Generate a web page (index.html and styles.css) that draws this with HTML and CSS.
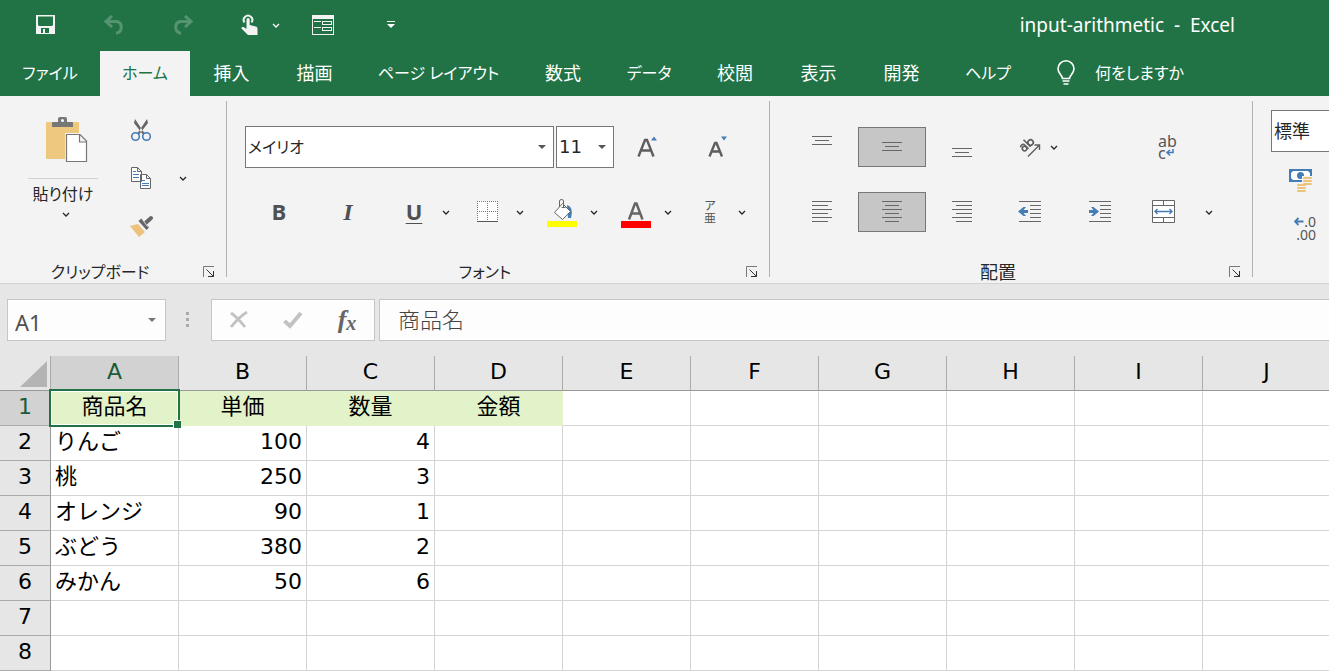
FILE: index.html
```html
<!DOCTYPE html>
<html lang="ja">
<head>
<meta charset="utf-8">
<meta name="viewport" content="width=device-width, initial-scale=1">
<title>input-arithmetic - Excel</title>
<link rel="stylesheet" href="styles.css">
</head>
<body>
<svg class="defs" aria-hidden="true">
  <symbol id="chev" viewBox="0 0 10 10"><path d="M2 4l3 3 3-3" fill="none" stroke="currentColor" stroke-width="1.300"/></symbol>
  <symbol id="tri" viewBox="0 0 8 4"><path d="M0 0h8L4 4z" fill="currentColor"/></symbol>
  <symbol id="launch" viewBox="0 0 12 12"><path d="M.5 11V.5H11" fill="none" stroke="#777"/><path d="M3.500 3.500l7 7M5 10.500h5.500V5" fill="none" stroke="#333"/></symbol>
</svg>

<header class="top">
  <div class="titlebar">
    <div class="quick">
      <button class="ic" aria-label="上書き保存"><svg width="20" height="20" viewBox="0 0 20 20"><path fill="#f3f3f3" fill-rule="evenodd" d="M1 0h19v19H1zM3 1.500v8.500l1 1h13l1-1V1.500zM6 13v5h2v-4h2v4h4v-5z"/></svg></button>
      <button class="ic undo" aria-label="元に戻す"><svg width="22" height="20" viewBox="0 0 22 20"><path d="M8 1L2 6.500 8 12M2 6.500h11a6 6 0 0 1 0 11.500h-1" fill="none" stroke="#559371" stroke-width="3"/></svg></button>
      <button class="ic" aria-label="やり直し"><svg width="22" height="20" viewBox="0 0 22 20"><path d="M14 1l6 5.500-6 5.500M20 6.500H9a6 6 0 0 0 0 11.500h1" fill="none" stroke="#559371" stroke-width="3"/></svg></button>
      <div class="touch">
        <button class="ic" aria-label="タッチ/マウス モード"><svg width="18" height="22" viewBox="0 0 18 22"><path d="M3.500 8.500a4.300 4.300 0 1 1 7 0" fill="none" stroke="#f3f3f3" stroke-width="2"/><path d="M5.500 5.500a1.600 1.600 0 0 1 3.200 0V11l6 1.500c1.200.3 1.800 1.200 1.800 2.500v6H7L.5 14.500c-.5-1 1-2 2.500-1.200L5.500 15z" fill="#f3f3f3"/></svg></button>
        <button class="chev" aria-label="モードの選択"><svg width="10" height="10"><use href="#chev"/></svg></button>
      </div>
      <button class="ic" aria-label="フォーム"><svg width="22" height="20" viewBox="0 0 22 20" shape-rendering="crispEdges"><path d="M0 0h22v4H0z" fill="#f3f3f3"/><path d="M.5.500h21v19H.5zM2 6.500h7M2 12.500h7M10.500 6.500h9v3h-9zM10.500 12.500h9v3h-9z" fill="none" stroke="#f3f3f3"/></svg></button>
      <button class="ic" aria-label="クイック アクセス ツール バーのカスタマイズ"><svg width="8" height="8" viewBox="0 0 8 8"><path d="M0 0h8v1H0zM0 3h8L4 7z" fill="#fff"/></svg></button>
    </div>
    <h1 class="title">input-arithmetic&nbsp; -&nbsp; Excel</h1>
  </div>
  <nav class="tabs" role="tablist" aria-label="リボン">
    <button role="tab" class="kana">ファイル</button>
    <button role="tab" class="kana on" aria-selected="true">ホーム</button>
    <button role="tab">挿入</button>
    <button role="tab">描画</button>
    <button role="tab" class="kana">ページ レイアウト</button>
    <button role="tab">数式</button>
    <button role="tab" class="kana">データ</button>
    <button role="tab">校閲</button>
    <button role="tab">表示</button>
    <button role="tab">開発</button>
    <button role="tab" class="kana">ヘルプ</button>
    <button class="tell kana"><svg width="20" height="26" viewBox="0 0 20 26"><path d="M6.500 18.500c0-3-4.500-5-4.500-9.700a8 8 0 0 1 16 0c0 4.700-4.500 6.700-4.500 9.700zM6.500 21h7M7.500 24h5" fill="none" stroke="#fff" stroke-width="1.600"/></svg><span>何をしますか</span></button>
  </nav>
</header>

<main class="book">
<section class="ribbon" aria-label="ホーム">
  <div class="group clip">
    <div class="clipbody">
      <button class="paste">
        <svg width="52" height="48" viewBox="0 0 52 48"><g transform="translate(8 0)"><rect x="1" y="6" width="33" height="37" rx="1" fill="#edc87e"/><path d="M7 11V7q0-1 1-1h5V3q0-2 2-2h5q2 0 2 2v3h5q1 0 1 1v4z" fill="#777"/><circle cx="17.500" cy="4.500" r="1.500" fill="#fff"/><path d="M20 17h16l7 7v23H20z" fill="#f3f3f3"/><path d="M21.500 18.500H35l6.500 6.500v20.500h-20zM34.500 18.500V26h7" fill="#fff" stroke="#777" stroke-width="1.200"/></g></svg>
        <span class="pastelabel kana">貼り付け</span>
        <svg width="10" height="10"><use href="#chev"/></svg>
      </button>
      <div class="cliptools">
        <button class="ic" aria-label="切り取り"><svg width="22" height="24" viewBox="0 0 22 24"><path d="M5 1l10 15h-2.500L4 5zM17 1L7 16h2.500L18 5z" fill="#666"/><circle cx="5.500" cy="18.500" r="3.800" fill="none" stroke="#447cb6" stroke-width="1.600"/><circle cx="16.500" cy="18.500" r="3.800" fill="none" stroke="#447cb6" stroke-width="1.600"/></svg></button>
        <div class="split wide">
          <button class="ic" aria-label="コピー"><svg width="26" height="22" viewBox="0 0 26 22"><path d="M3.500.500h6l4 4v10h-10zM9.500.500v4h4M12.500 7.500h6l4 4v10h-10zM18.500 7.500v4h4" fill="#fff" stroke="#666"/><path d="M5 4.500h3M5 7.500h6M5 10.500h6M14 13.500h3M14 16.500h7M14 18.500h7" stroke="#447cb6"/></svg></button>
          <button class="chev" aria-label="コピーの選択"><svg width="10" height="10"><use href="#chev"/></svg></button>
        </div>
        <button class="ic" aria-label="書式のコピー/貼り付け"><svg width="24" height="22" viewBox="0 0 24 22"><path d="M1 11l8-2 7 8-6 5z" fill="#edc27c"/><path d="M9.500 6l3-2.500 7.500 9-2.500 2.500z" fill="#666"/><path d="M16 8.500L22 3" stroke="#666" stroke-width="4" stroke-linecap="round"/><path d="M13.500 4.500l5 7" stroke="#f3f3f3" stroke-width=".8"/></svg></button>
      </div>
    </div>
    <div class="foot kana"><span>クリップボード</span><button class="launch" aria-label="クリップボードの詳細"><svg width="12" height="12"><use href="#launch"/></svg></button></div>
  </div>

  <div class="group font">
    <div class="row r1">
      <label class="drop family kana"><select aria-label="フォント"><option>メイリオ</option></select><svg width="8" height="4"><use href="#tri"/></svg></label>
      <label class="drop size"><select aria-label="フォント サイズ"><option>11</option></select><svg width="8" height="4"><use href="#tri"/></svg></label>
      <button class="ic grow" aria-label="フォント サイズの拡大"><svg width="22" height="26" viewBox="0 0 22 26"><path d="M1.500 22.500L8 6h2l6.500 16.500M4 16.500h10" fill="none" stroke="#5e5e5e" stroke-width="2.400"/><path d="M14 6.500l3-4 3 4z" fill="#447cb6"/></svg></button>
      <button class="ic shrink" aria-label="フォント サイズの縮小"><svg width="22" height="26" viewBox="0 0 22 26"><path d="M2.500 22.500L8 9h1.500L15 22.500M5 17.500h8" fill="none" stroke="#5e5e5e" stroke-width="2.400"/><path d="M14 2.500h6l-3 4z" fill="#447cb6"/></svg></button>
    </div>
    <div class="row r2">
      <button class="ic bold" aria-label="太字">B</button>
      <button class="ic italic" aria-label="斜体">I</button>
      <div class="splits">
        <div class="split"><button class="ic under" aria-label="下線">U</button><button class="chev" aria-label="下線の選択"><svg width="10" height="10"><use href="#chev"/></svg></button></div>
        <div class="split"><button class="ic" aria-label="罫線"><svg width="22" height="22" viewBox="0 0 22 22" shape-rendering="crispEdges"><path d="M0 0h21v21H0z" fill="#fff"/><path d="M0 .500h21M0 10.500h21M.5 0v20M10.500 0v20M20.500 0v20" stroke="#777" stroke-dasharray="1 1"/><path d="M0 20.500h21" stroke="#555"/></svg></button><button class="chev" aria-label="罫線の選択"><svg width="10" height="10"><use href="#chev"/></svg></button></div>
        <div class="split"><button class="ic" aria-label="塗りつぶしの色"><svg width="30" height="32" viewBox="0 0 30 32"><path d="M20 9q7 2 4 13h-3z" fill="#447cb6"/><path d="M15.500 7.500l8 8-8 8-8-7z" fill="#fff" stroke="#666"/><path d="M12.500 11V5q0-1.500 2-1.500t2 1.500v7M14.500 11.500h4" fill="none" stroke="#666"/><path d="M0 25h30v6H0z" fill="#ff0"/></svg></button><button class="chev" aria-label="塗りつぶしの色の選択"><svg width="10" height="10"><use href="#chev"/></svg></button></div>
        <div class="split"><button class="ic" aria-label="フォントの色"><svg width="30" height="32" viewBox="0 0 30 32"><path d="M8 23.500L14 7.500h1.500l6 16M10.500 17.500h9" fill="none" stroke="#666" stroke-width="2.500"/><path d="M0 25h30v7H0z" fill="red"/></svg></button><button class="chev" aria-label="フォントの色の選択"><svg width="10" height="10"><use href="#chev"/></svg></button></div>
        <div class="split"><button class="ic ruby" aria-label="ふりがな"><span>ア</span><span>亜</span></button><button class="chev" aria-label="ふりがなの選択"><svg width="10" height="10"><use href="#chev"/></svg></button></div>
      </div>
    </div>
    <div class="foot kana"><span>フォント</span><button class="launch" aria-label="フォントの詳細"><svg width="12" height="12"><use href="#launch"/></svg></button></div>
  </div>

  <div class="group align">
    <div class="row r3">
      <button class="sq" aria-label="上揃え"><svg width="20" height="22" viewBox="0 0 20 22" shape-rendering="crispEdges"><path d="M0 .500h20M3 4.500h14M0 8.500h20" stroke="#666"/></svg></button>
      <button class="sq on" aria-label="上下中央揃え"><svg width="20" height="22" viewBox="0 0 20 22" shape-rendering="crispEdges"><path d="M0 6.500h20M3 10.500h14M0 14.500h20" stroke="#666"/></svg></button>
      <button class="sq" aria-label="下揃え"><svg width="20" height="22" viewBox="0 0 20 22" shape-rendering="crispEdges"><path d="M0 12.500h20M3 16.500h14M0 20.500h20" stroke="#666"/></svg></button>
      <div class="split orient"><button class="ic" aria-label="方向"><svg width="22" height="22" viewBox="0 0 22 22"><g transform="translate(7 9) rotate(-45)" fill="none" stroke="#5e5e5e" stroke-width="1.600"><circle cx="-3.500" cy="1.500" r="2.300"/><path d="M-5.500-2.500q4.500-2 4.500 2V4.500M2-5.500v10"/><circle cx="5" cy="1.500" r="2.700"/></g><path d="M9 20.500L20 9.500M15.500 9h5v5" fill="none" stroke="#5e5e5e" stroke-width="1.400"/></svg></button><button class="chev" aria-label="方向の選択"><svg width="10" height="10"><use href="#chev"/></svg></button></div>
      <button class="ic wrap" aria-label="折り返して全体を表示する"><span>ab</span><span class="wrapc">c<svg width="8" height="8" viewBox="0 0 8 8"><path d="M7 0v3.500H1M4 1L1 3.500 4 6.500" fill="none" stroke="#447cb6" stroke-width="1.500"/></svg></span></button>
    </div>
    <div class="row r3">
      <button class="sq" aria-label="左揃え"><svg width="20" height="22" viewBox="0 0 20 22" shape-rendering="crispEdges"><path d="M0 .500h20M0 4.500h16M0 8.500h20M0 12.500h16M0 16.500h20M0 20.500h16" stroke="#666"/></svg></button>
      <button class="sq on" aria-label="中央揃え"><svg width="20" height="22" viewBox="0 0 20 22" shape-rendering="crispEdges"><path d="M0 .500h20M3 4.500h14M0 8.500h20M3 12.500h14M0 16.500h20M3 20.500h14" stroke="#666"/></svg></button>
      <button class="sq" aria-label="右揃え"><svg width="20" height="22" viewBox="0 0 20 22" shape-rendering="crispEdges"><path d="M0 .500h20M4 4.500h16M0 8.500h20M4 12.500h16M0 16.500h20M4 20.500h16" stroke="#666"/></svg></button>
      <div class="indents">
        <button class="sq" aria-label="インデントを減らす"><svg width="24" height="22" viewBox="0 0 24 22"><path d="M1 .500h22M12 4.500h11M12 8.500h11M12 12.500h11M12 16.500h11M1 20.500h22" stroke="#666"/><path d="M0 10.500L5.500 6H8L5.500 9H10v3H5.500L8 15H5.500z" fill="#447cb6"/></svg></button>
        <button class="sq" aria-label="インデントを増やす"><svg width="24" height="22" viewBox="0 0 24 22"><path d="M1 .500h22M12 4.500h11M12 8.500h11M12 12.500h11M12 16.500h11M1 20.500h22" stroke="#666"/><path d="M11 10.500L5.500 6H3l2.500 3H1v3h4.500L3 15h2.500z" fill="#447cb6"/></svg></button>
      </div>
      <div class="split merge"><button class="ic" aria-label="セルを結合して中央揃え"><svg width="24" height="24" viewBox="0 0 24 24"><path d="M1.500.500h22v22h-22z" fill="#fff" stroke="#666"/><path d="M1.500 5.500h22M1.500 17.500h22M12.500 1v4M12.500 18v4" stroke="#666"/><path d="M4 11.500h17M6.500 9L4 11.500 6.500 14M18.500 9l2.500 2.500-2.500 2.500" fill="none" stroke="#447cb6" stroke-width="1.400"/></svg></button><button class="chev" aria-label="結合の選択"><svg width="10" height="10"><use href="#chev"/></svg></button></div>
    </div>
    <div class="foot"><span>配置</span><button class="launch" aria-label="配置の詳細"><svg width="12" height="12"><use href="#launch"/></svg></button></div>
  </div>

  <div class="group number">
    <label class="drop format"><select aria-label="数値の書式"><option>標準</option></select></label>
    <button class="ic money" aria-label="通貨表示形式"><svg width="24" height="24" viewBox="0 0 24 24"><path d="M0 1h23v13H0z" fill="#447cb6"/><path d="M2 5l2-2h15l2 2v5l-2 2H4l-2-2z" fill="#fff"/><circle cx="11.500" cy="7.500" r="3.500" fill="#447cb6"/><path d="M13 8h11v11h-6v5H7v-9h6z" fill="#f3f3f3"/><g fill="#edc27c"><rect x="14" y="9" width="9" height="2" rx="1"/><rect x="14" y="12" width="9" height="2" rx="1"/><rect x="14" y="15" width="9" height="2" rx="1"/><rect x="8" y="16" width="9" height="2" rx="1"/><rect x="8" y="19" width="9" height="2" rx="1"/><rect x="8" y="22" width="9" height="2" rx="1"/></g></svg></button>
    <button class="ic decimal" aria-label="小数点以下の表示桁数を増やす"><span><svg width="10" height="9" viewBox="0 0 10 9"><path d="M9.500 4.500H1M4.500 1L1 4.500 4.500 8" fill="none" stroke="#447cb6" stroke-width="1.800"/></svg>.0</span><span>.00</span></button>
  </div>
</section>

<section class="fbar" aria-label="数式バー">
  <div class="namebox"><input type="text" value="A1" aria-label="名前ボックス"><button class="namedrop" aria-label="名前の一覧"><svg width="8" height="4"><use href="#tri"/></svg></button></div>
  <svg class="dots" width="4" height="16" viewBox="0 0 4 16" aria-hidden="true"><path d="M0 0h3v3H0zM0 6h3v3H0zM0 12h3v3H0z" fill="#aaa"/></svg>
  <div class="fbtns">
    <button class="ic" aria-label="キャンセル"><svg width="20" height="18" viewBox="0 0 20 18"><path d="M2 2q6 4 14 14M18 1Q10 6 2 16" fill="none" stroke="#c2c2c2" stroke-width="2.800"/></svg></button>
    <button class="ic" aria-label="入力"><svg width="20" height="18" viewBox="0 0 20 18"><path d="M1.500 10l5.500 5L18 2" fill="none" stroke="#c2c2c2" stroke-width="4"/></svg></button>
    <button class="ic fx" aria-label="関数の挿入">f<span>x</span></button>
  </div>
  <input class="formula" type="text" value="商品名" aria-label="数式">
</section>

<div class="sheet">
<table class="grid">
  <colgroup><col class="rowcol"><col span="10" class="datacol"></colgroup>
  <thead>
    <tr><th class="corner"><svg width="27" height="26" viewBox="0 0 27 26" aria-hidden="true"><path d="M27 0v26H0z" fill="#b4b4b4"/></svg></th><th class="cur" scope="col">A</th><th scope="col">B</th><th scope="col">C</th><th scope="col">D</th><th scope="col">E</th><th scope="col">F</th><th scope="col">G</th><th scope="col">H</th><th scope="col">I</th><th scope="col">J</th></tr>
  </thead>
  <tbody>
    <tr class="heads"><th class="cur" scope="row">1</th><td class="sel">商品名<span class="cursor"></span></td><td>単価</td><td>数量</td><td>金額</td><td></td><td></td><td></td><td></td><td></td><td></td></tr>
    <tr><th scope="row">2</th><td>りんご</td><td class="n">100</td><td class="n">4</td><td></td><td></td><td></td><td></td><td></td><td></td><td></td></tr>
    <tr><th scope="row">3</th><td>桃</td><td class="n">250</td><td class="n">3</td><td></td><td></td><td></td><td></td><td></td><td></td><td></td></tr>
    <tr><th scope="row">4</th><td>オレンジ</td><td class="n">90</td><td class="n">1</td><td></td><td></td><td></td><td></td><td></td><td></td><td></td></tr>
    <tr><th scope="row">5</th><td>ぶどう</td><td class="n">380</td><td class="n">2</td><td></td><td></td><td></td><td></td><td></td><td></td><td></td></tr>
    <tr><th scope="row">6</th><td>みかん</td><td class="n">50</td><td class="n">6</td><td></td><td></td><td></td><td></td><td></td><td></td><td></td></tr>
    <tr><th scope="row">7</th><td></td><td></td><td></td><td></td><td></td><td></td><td></td><td></td><td></td><td></td></tr>
    <tr><th scope="row">8</th><td></td><td></td><td></td><td></td><td></td><td></td><td></td><td></td><td></td><td></td></tr>
  </tbody>
</table>
</div>
</main>
</body>
</html>
```
FILE: styles.css
```css
* { box-sizing: border-box; }
body {
  margin: 0;
  background: #fff;
  color: #262626;
  font-family: "Noto Sans", "Noto Sans CJK JP", sans-serif;
  font-size: 18px;
  line-height: 24px;
  overflow: hidden;
}
button, input, select { font: inherit; color: inherit; }
button { border: 0; padding: 0; background: none; white-space: nowrap; }
svg { display: block; flex: none; }
.defs { display: none; }
.kana { font-size: 16px; font-feature-settings: "palt"; }

/* Title bar and tabs */
.top { background: #217346; color: #fff; }
.titlebar { display: flex; justify-content: space-between; align-items: center; height: 51px; padding: 0 94px 2px 30px; }
.quick { display: flex; align-items: center; gap: 38px; }
.ic { display: flex; align-items: center; justify-content: center; width: 30px; height: 40px; flex: none; }
.chev { display: flex; align-items: center; justify-content: center; width: 10px; height: 40px; flex: none; }
.undo { margin: 0 -1px 0 2px; }
.touch { display: flex; gap: 6px; margin-right: -11px; }
.title { margin: 0; font-size: 19px; font-weight: 400; white-space: nowrap; }
.tabs {
  display: grid;
  grid-template-columns: 100px 90px 83px 83px 165px 84px 88px 84px 83px 83px 90px 1fr;
  height: 45px;
}
.tabs button { padding-bottom: 2px; }
.tabs .on { background: #f3f3f3; color: #217346; }
.tabs .tell { display: flex; align-items: center; gap: 19px; padding-left: 23px; }

/* Ribbon */
.ribbon { display: flex; height: 188px; padding-top: 5px; background: #f3f3f3; border-bottom: 1px solid #d2d2d2; overflow: hidden; }
.group {
  display: flex;
  flex-direction: column;
  flex: none;
  background: linear-gradient(#b1b1b1, #b1b1b1) right top / 1px 176px no-repeat;
}
.clip { width: 227px; }
.font { width: 543px; padding-top: 25px; }
.align { width: 483px; padding-top: 25px; }
.number { flex: 1 0 76px; padding: 9px 0 0 18px; background: none; }
.foot { display: flex; align-items: center; height: 22px; margin-top: auto; padding-right: 12px; }
.foot span { flex: 1; padding-right: 3px; text-align: center; }
.launch { width: 12px; height: 12px; }

.clipbody { display: flex; gap: 28px; padding: 9px 0 0 28px; }
.paste { display: flex; flex-direction: column; align-items: center; width: 70px; padding-top: 6px; }
.pastelabel { width: 70px; margin-top: 14px; padding: 3px 0; border-top: 1px solid #d2d2d2; }
.paste svg + .pastelabel + svg { margin-left: 6px; }
.cliptools { display: flex; flex-direction: column; gap: 8px; }

.row { display: flex; align-items: center; height: 42px; margin-bottom: 23px; }
.r1 { padding-left: 18px; }
.r2 { padding-left: 37px; gap: 39px; }
.r3 { padding-left: 18px; gap: 2px; }
.splits { display: flex; gap: 22px; margin-left: -3px; }
.split { display: flex; gap: 12px; }
.wide { gap: 22px; }
.drop { display: flex; align-items: center; height: 42px; padding-right: 7px; border: 1px solid #777; background: #fff; color: #262626; }
.drop select { flex: 1; min-width: 0; height: 40px; padding: 0 2px; border: 0; background: none; appearance: none; }
.drop svg { color: #555; }
.family { width: 309px; margin-right: 2px; }
.size { width: 58px; font-family: "DejaVu Sans", sans-serif; }
.format { width: 160px; flex: none; }
.grow { margin-left: 19px; }
.shrink { margin-left: 40px; }
.bold, .italic, .under { color: #505050; font-size: 22px; font-weight: 700; }
.bold, .under { font-family: "Open Sans", sans-serif; padding-bottom: 2px; }
.italic { font-family: "Liberation Serif", serif; font-style: italic; font-size: 24px; }
.under { text-decoration: underline; text-decoration-thickness: 1px; text-underline-offset: 3px; }
.ruby { flex-direction: column; color: #555; font-size: 12px; line-height: 13px; }

.sq { display: flex; align-items: center; justify-content: center; width: 68px; height: 40px; flex: none; }
.sq.on { background: #c6c6c6; border: 1px solid #777; }
.orient { gap: 4px; margin-left: 17px; }
.wrap { flex-direction: column; margin-left: 92px; color: #555; font-size: 16px; line-height: 12px; align-items: flex-start; padding-left: 5px; }
.wrapc { display: flex; align-items: center; }
.indents { display: flex; gap: 2px; margin-left: -2px; }
.merge { gap: 26px; margin-left: 12px; }
.money { margin: 8px 0 0 15px; }
.decimal { flex-direction: column; align-items: flex-end; margin: 8px 0 0 15px; color: #555; font-size: 14px; line-height: 13px; }
.decimal span { display: flex; align-items: center; }

/* Formula bar */
.fbar { display: flex; align-items: center; height: 72px; padding-left: 7px; background: #e6e6e6; }
.namebox, .fbtns, .formula { height: 42px; border: 1px solid #c6c6c6; background: #fdfdfd; }
.namebox { display: flex; align-items: center; width: 159px; padding: 0 7px 0 7px; color: #505050; }
.namebox input { flex: 1; min-width: 0; height: 40px; padding: 4px 0 0; border: 0; background: none; font-size: 22px; }
.namedrop { width: 10px; color: #777; }
.dots { margin: 0 21px 0 20px; }
.fbtns { display: flex; align-items: center; gap: 24px; width: 164px; padding-left: 12px; }
.fx { color: #666; font: italic 700 26px/30px "Liberation Serif", serif; }
.fx span { font-size: 20px; padding-top: 6px; }
.formula { flex: 1; min-width: 0; margin-left: 4px; padding: 0 18px 4px; border-right: 0; color: #444; font-size: 22px; font-family: "Noto Sans CJK JP", sans-serif; font-weight: 300; }

/* Sheet */
.sheet { overflow: hidden; }
.grid { width: 1331px; table-layout: fixed; border-collapse: separate; border-spacing: 0; color: #000; font-family: "DejaVu Sans", "Noto Sans CJK JP", sans-serif; font-size: 22px; line-height: 28px; }
.rowcol { width: 51px; }
.datacol { width: 128px; }
.grid th { padding: 0 0 2px; height: 35px; font-weight: 400; background: #e6e6e6; border-bottom: 1px solid #ababab; border-right: 1px solid #ababab; }
.grid thead th { border-bottom-color: #999; }
.grid tbody th { border-right-color: #999; }
.grid .corner { padding: 0 3px 3px 20px; vertical-align: bottom; }
.grid .cur { background: #d2d2d2; color: #1a5c38; }
.grid td { position: relative; height: 35px; padding: 0 4px 2px; border-right: 1px solid #d4d4d4; border-bottom: 1px solid #d4d4d4; white-space: nowrap; }
.grid .n { text-align: right; }
.heads td { text-align: center; }
.grid .heads td:nth-child(-n+5) { background: #e2f3c9; border-color: #e2f3c9; }
.cursor { position: absolute; inset: -2px; border: 2px solid #217346; box-shadow: inset 0 0 0 1px #fff; z-index: 1; }
.cursor::after { content: ""; position: absolute; right: -3px; bottom: -3px; width: 7px; height: 7px; background: #217346; border: solid #fff; border-width: 1px 0 0 1px; }
```
